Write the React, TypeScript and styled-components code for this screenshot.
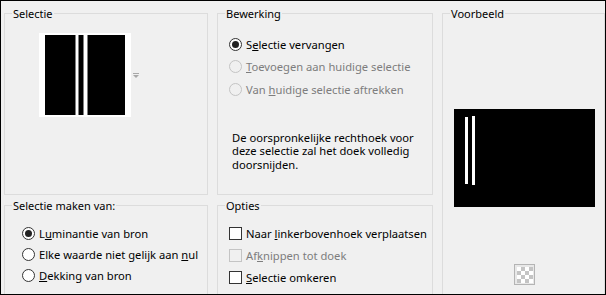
import styled, { createGlobalStyle } from 'styled-components';

const GlobalStyle = createGlobalStyle`
  html, body { margin: 0; padding: 0; background: #f0f0f0; }
  body { font-family: "Noto Sans", "Liberation Sans", sans-serif; font-size: 11.2px; color: #000; }
`;

const Venster = styled.div`
  width: 606px;
  height: 295px;
  box-sizing: border-box;
  border: 1px solid #000;
  background: #f0f0f0;
  overflow: hidden;
  display: grid;
  grid-template-columns: 204px 216px 163px;
  grid-template-rows: 189px 130px;
  column-gap: 9px;
  row-gap: 3px;
  padding: 5px 0 0 3px;
`;

const Groep = styled.fieldset<{ $kol: number; $rij: string }>`
  margin: 0;
  padding: 0;
  min-width: 0;
  border: 1px solid #dcdcdc;
  box-sizing: border-box;
  grid-column: ${(p) => p.$kol};
  grid-row: ${(p) => p.$rij};
`;

const Legenda = styled.legend`
  margin-left: 7px;
  padding: 0 1px;
  height: 15px;
  line-height: 15px;
  font-size: 11px;
`;

const SelectieInhoud = styled.div`
  display: flex;
  align-items: center;
  gap: 2px;
  padding: 12px 0 0 34px;
`;

const Miniatuur = styled.div`
  background: #fff;
  padding: 2px 6px;
  display: flex;
`;

const Lijst = styled.div<{ $top: number; $left: number; $hoogte: number }>`
  display: flex;
  flex-direction: column;
  padding: ${(p) => `${p.$top}px 0 0 ${p.$left}px`};
  & > * { height: ${(p) => p.$hoogte}px; }
`;

const Optie = styled.label<{ $uit?: boolean }>`
  display: flex;
  align-items: center;
  gap: 4px;
  color: ${(p) => (p.$uit ? '#7d7d7d' : '#000')};
  white-space: nowrap;
`;

const Rondje = styled.span<{ $aan?: boolean; $uit?: boolean }>`
  width: 13px;
  height: 13px;
  box-sizing: border-box;
  border-radius: 50%;
  border: 1px solid ${(p) => (p.$uit ? '#c4c4c4' : '#333')};
  background: ${(p) => (p.$uit ? '#f0f0f0' : '#fff')};
  display: flex;
  align-items: center;
  justify-content: center;
  flex: none;
  &::after {
    content: '';
    display: ${(p) => (p.$aan ? 'block' : 'none')};
    width: 7px;
    height: 7px;
    border-radius: 50%;
    background: #222;
  }
`;

const Vakje = styled.span<{ $uit?: boolean }>`
  width: 13px;
  height: 13px;
  box-sizing: border-box;
  border: 1px solid ${(p) => (p.$uit ? '#c4c4c4' : '#333')};
  background: ${(p) => (p.$uit ? '#f0f0f0' : '#fff')};
  flex: none;
`;

const Uitleg = styled.p`
  margin: 30px 0 0 14px;
  line-height: 13.5px;
  width: 192px;
`;

const VoorbeeldInhoud = styled.div`
  display: flex;
  flex-direction: column;
  align-items: center;
  padding: 88px 0 0 2px;
`;

const Transparant = styled.div`
  margin-top: 57px;
  width: 21px;
  height: 21px;
  box-sizing: border-box;
  border: 1px solid #b4b4b4;
  background: #e8e8e8;
  display: flex;
  align-items: center;
  justify-content: center;
`;

function Miniatuurbeeld() {
  return (
    <svg width="80" height="80" viewBox="0 0 80 80">
      <rect width="80" height="80" fill="#000" />
      <rect x="30" y="0" width="4" height="80" fill="#808080" />
      <rect x="31" y="0" width="2" height="80" fill="#fff" />
      <rect x="38" y="0" width="5" height="80" fill="#808080" />
      <rect x="39" y="0" width="3" height="80" fill="#fff" />
    </svg>
  );
}

function Pijltje() {
  return (
    <svg width="6" height="5" viewBox="0 0 6 5">
      <rect x="0" y="0" width="6" height="1" fill="#a8a8a8" />
      <polygon points="0,2 6,2 3,5" fill="#a8a8a8" />
    </svg>
  );
}

function Voorbeeldbeeld() {
  return (
    <svg width="141" height="98" viewBox="0 0 141 98">
      <rect width="141" height="98" fill="#000" />
      <rect x="11" y="8" width="3" height="67" fill="#fff" />
      <rect x="18" y="7" width="3" height="69" fill="#fff" />
    </svg>
  );
}

function Schaakbord() {
  const vakken = [];
  for (let r = 0; r < 4; r++) {
    for (let k = 0; k < 4; k++) {
      vakken.push(
        <rect key={`${r}-${k}`} x={k * 4} y={r * 4} width="4" height="4" fill={(r + k) % 2 ? '#c4c4c4' : '#fff'} />
      );
    }
  }
  return (
    <svg width="16" height="16" viewBox="0 0 16 16">
      {vakken}
    </svg>
  );
}

export default function App() {
  return (
    <>
      <GlobalStyle />
      <Venster>
        <Groep $kol={1} $rij="1">
          <Legenda>Selectie</Legenda>
          <SelectieInhoud>
            <Miniatuur>
              <Miniatuurbeeld />
            </Miniatuur>
            <Pijltje />
          </SelectieInhoud>
        </Groep>

        <Groep $kol={2} $rij="1">
          <Legenda>Bewerking</Legenda>
          <Lijst $top={12} $left={11} $hoogte={22.5}>
            <Optie>
              <Rondje $aan />
              <span>S<u>e</u>lectie vervangen</span>
            </Optie>
            <Optie $uit>
              <Rondje $uit />
              <span><u>T</u>oevoegen aan huidige selectie</span>
            </Optie>
            <Optie $uit>
              <Rondje $uit />
              <span>Van <u>h</u>uidige selectie aftrekken</span>
            </Optie>
          </Lijst>
          <Uitleg>
            De oorspronkelijke rechthoek voor deze selectie zal het doek volledig doorsnijden.
          </Uitleg>
        </Groep>

        <Groep $kol={3} $rij="1 / 3">
          <Legenda>Voorbeeld</Legenda>
          <VoorbeeldInhoud>
            <Voorbeeldbeeld />
            <Transparant>
              <Schaakbord />
            </Transparant>
          </VoorbeeldInhoud>
        </Groep>

        <Groep $kol={1} $rij="2">
          <Legenda>Selectie maken van:</Legenda>
          <Lijst $top={10} $left={17} $hoogte={21}>
            <Optie>
              <Rondje $aan />
              <span>L<u>u</u>minantie van bron</span>
            </Optie>
            <Optie>
              <Rondje />
              <span>Elke waarde niet gelijk aan <u>n</u>ul</span>
            </Optie>
            <Optie>
              <Rondje />
              <span><u>D</u>ekking van bron</span>
            </Optie>
          </Lijst>
        </Groep>

        <Groep $kol={2} $rij="2">
          <Legenda>Opties</Legenda>
          <Lijst $top={9} $left={11} $hoogte={22}>
            <Optie>
              <Vakje />
              <span>Naar <u>l</u>inkerbovenhoek verplaatsen</span>
            </Optie>
            <Optie $uit>
              <Vakje $uit />
              <span>Af<u>k</u>nippen tot doek</span>
            </Optie>
            <Optie>
              <Vakje />
              <span><u>S</u>electie omkeren</span>
            </Optie>
          </Lijst>
        </Groep>
      </Venster>
    </>
  );
}
